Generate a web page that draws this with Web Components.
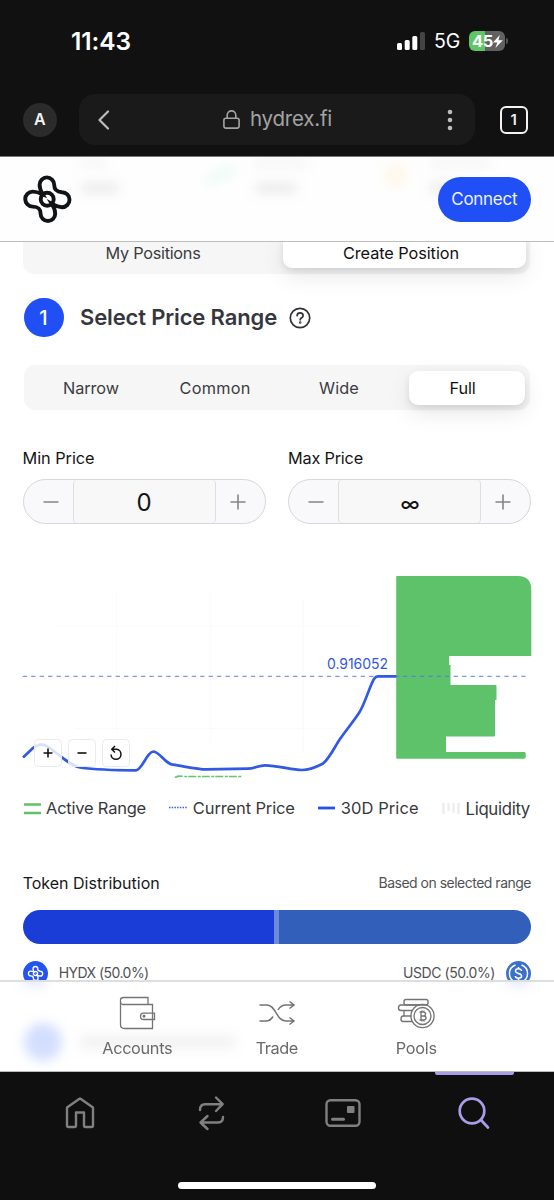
<!DOCTYPE html>
<html lang="en">
<head>
<meta charset="utf-8">
<title>Hydrex</title>
<style>
html,body{margin:0;padding:0;background:#fff}
body{width:554px;height:1200px;overflow:hidden;font-family:Inter,"Liberation Sans",sans-serif}
</style>
</head>
<body>
<phone-screen></phone-screen>
<script>
const mount = (el, html) => { el.attachShadow({mode:'open'}).innerHTML = html; };
const pen = document.createElement('canvas').getContext('2d');

/* Single-line text tracked to a given width. */
class FitText extends HTMLElement {
  connectedCallback() {
    if (this.shadowRoot) return;
    const size = this.getAttribute('size') || 17, weight = this.getAttribute('weight') || 400;
    const w = +this.getAttribute('w'), t = this.textContent;
    pen.font = `${weight} ${size}px Inter`;
    const ls = (w - pen.measureText(t).width) / Math.max(1, t.length);
    mount(this, `<style>:host{display:block;flex:none;width:${w}px;white-space:nowrap;font:${weight} ${size}px/1.2 Inter,"Liberation Sans",sans-serif;letter-spacing:${ls.toFixed(3)}px}</style><slot></slot>`);
  }
}

const LOGO = `<path d="M-4.6-5C-6.500-8.500-7.600-10.500-7.600-14.500A7.300 7.300 0 0 1 7-14.500C7-9.300 9.500-7.400 14.800-7A7.500 7.500 0 0 1 14.800 8C10.500 8 8 6.500 4.800 4.800C7 8.500 8 10.500 8 14.500A7.300 7.300 0 0 1-6.600 14.500C-6.600 9.300-9 7.600-14.500 7.400A7.500 7.500 0 0 1-14.500-7.600C-10.500-7.600-8-6.500-4.600-5Z"/><circle r="6.500"/>`;

class StatusBar extends HTMLElement {
  connectedCallback() {
    mount(this, `<style>
      :host{display:flex;height:83px;box-sizing:border-box;padding:0 46px 0 71px;align-items:center;justify-content:space-between;color:#fff}
      .r{display:flex;align-items:center;gap:9px} svg{display:block}
      .bat{display:flex;align-items:center;justify-content:flex-start;box-sizing:border-box;width:36px;height:20px;padding-left:3px;border-radius:6px;background:linear-gradient(90deg,#5fc665 45%,#616161 45%)}
      .nub{width:2px;height:6px;border-radius:0 2px 2px 0;background:#555;margin-left:-8px}
    </style>
    <fit-text w="60" size="24.5" weight="600">11:43</fit-text>
    <div class="r">
      <svg width="28" height="18" fill="#fff"><rect y="11" width="5" height="7" rx="1.5"/><rect x="7.7" y="8" width="5" height="10" rx="1.5"/><rect x="15.3" y="4" width="5" height="14" rx="1.5"/><rect x="23" width="5" height="18" rx="1.5" fill="#444"/></svg>
      <fit-text w="26" size="19.5">5G</fit-text>
      <div class="bat"><fit-text w="21" size="16.5" weight="700">45</fit-text><svg width="10" height="13" viewBox="0 0 10 13" fill="#fff"><path d="M6.8 0L0 7.4H4.3L2.4 13L9.8 5.3H5.4Z"/></svg></div>
      <span class="nub"></span>
    </div>`);
  }
}

class BrowserBar extends HTMLElement {
  connectedCallback() {
    mount(this, `<style>
      :host{display:flex;height:73px;box-sizing:border-box;padding:12px 26px 12px 22.5px;align-items:center;color:#eee}
      .a{display:flex;align-items:center;justify-content:center;width:34px;height:34px;border-radius:50%;background:#2b2b2b;color:#f4f4f4}
      .u{display:flex;align-items:center;box-sizing:border-box;margin:0 25px 0 22.5px;width:396px;height:51px;border-radius:16px;background:#1a1a1a;color:#a3a3a3;padding:0 22.5px 0 19px}
      .lock{margin-left:113px;margin-right:10px}.dots{margin-left:auto}
      .t{display:flex;align-items:center;justify-content:center;box-sizing:border-box;width:28px;height:28px;border:2.6px solid #f3f3f3;border-radius:6px}
      svg{display:block}
    </style>
    <div class="a"><fit-text w="11" size="16" weight="600">A</fit-text></div>
    <div class="u">
      <svg width="12" height="20" fill="none" stroke="#bbb" stroke-width="2.2" stroke-linecap="round" stroke-linejoin="round"><path d="M10 1.5L1.5 10L10 18.5"/></svg>
      <svg class="lock" width="17" height="19" fill="none" stroke="#a3a3a3" stroke-width="1.6"><rect x=".9" y="8.2" width="15.2" height="9.9" rx="2"/><path d="M4.2 8V5.2a4.3 4.3 0 0 1 8.6 0V8"/></svg>
      <fit-text w="82" size="20.5">hydrex.fi</fit-text>
      <svg class="dots" width="6" height="22" fill="#bbb"><circle cx="3" cy="3" r="2.3"/><circle cx="3" cy="11" r="2.3"/><circle cx="3" cy="19" r="2.3"/></svg>
    </div>
    <div class="t"><fit-text w="7" size="15" weight="600">1</fit-text></div>`);
  }
}

class AppHeader extends HTMLElement {
  connectedCallback() {
    mount(this, `<style>
      :host{position:relative;display:flex;flex:none;align-items:center;justify-content:space-between;box-sizing:border-box;height:86px;padding:0 23px;border-top:1px solid #777;border-bottom:1.5px solid #bdbdbd;background:#fefefe;overflow:hidden}
      .haze{position:absolute;inset:0;width:554px;height:86px}
      .logo{position:relative;display:block}
      .b{position:relative;display:flex;align-items:center;justify-content:center;width:93.5px;height:45px;border-radius:23px;background:#204ff5;color:#eef2ff}
    </style>
    <svg class="haze"><defs><filter id="f" x="-100%" y="-200%" width="300%" height="500%"><feGaussianBlur stdDeviation="6"/></filter></defs><g filter="url(#f)">
      <rect x="82" y="26" width="36" height="10" fill="#aaa" opacity=".25"/><rect x="256" y="26" width="40" height="10" fill="#aaa" opacity=".25"/><rect x="430" y="26" width="30" height="10" fill="#aaa" opacity=".25"/>
      <rect x="80" y="3" width="26" height="6" fill="#bbb" opacity=".2"/><rect x="254" y="3" width="54" height="6" fill="#bbb" opacity=".2"/><rect x="430" y="3" width="60" height="6" fill="#bbb" opacity=".2"/>
      <path d="M206 24L236 12" stroke="#8fe0c0" stroke-width="10" opacity=".15"/><circle cx="396" cy="18" r="12" fill="#ffdf9e" opacity=".2"/></g></svg>
    <svg class="logo" width="50" height="50" viewBox="-24.2 -25.2 50 50" fill="none" stroke="#111417" stroke-width="3.9">${LOGO}</svg>
    <div class="b"><fit-text w="66" size="17">Connect</fit-text></div>`);
  }
}

class SegItem extends HTMLElement {
  connectedCallback() {
    mount(this, `<style>
      :host{display:flex;align-items:center;justify-content:center;height:34px;color:#3b3c3f;box-sizing:border-box;padding-top:var(--drop,2px)}
      :host([active]){background:#fff;border-radius:9px;color:#111;box-shadow:0 8px 24px rgba(0,0,0,.09),0 3px 7px rgba(0,0,0,.09)}
    </style><slot></slot>`);
  }
}
class SegBar extends HTMLElement {
  connectedCallback() {
    mount(this, `<style>:host{display:grid;box-sizing:border-box;background:#f6f6f6;border-radius:11px;padding:5.5px 5px}</style><slot></slot>`);
  }
}

class StepTitle extends HTMLElement {
  connectedCallback() {
    mount(this, `<style>:host{display:flex;align-items:center;height:40px;margin:24px 0 0 24px;color:#35373c}
      .n{display:flex;align-items:center;justify-content:center;width:39.5px;height:39.5px;border-radius:50%;background:#204ff5;color:#fff;margin-right:16.5px}svg{display:block;margin-left:12px}</style>
    <div class="n"><fit-text w="9" size="20" weight="500">1</fit-text></div><slot></slot>
    <svg width="22" height="22" fill="none" stroke="#303236" stroke-width="1.7" stroke-linecap="round"><circle cx="11" cy="11" r="9.7"/><path d="M8.1 8.6C8.3 5 14.1 5 14.1 8.7C14.1 10.8 11.2 10.8 11.2 12.8"/><circle cx="11.2" cy="15.6" r=".4"/></svg>`);
  }
}

class PriceInput extends HTMLElement {
  connectedCallback() {
    mount(this, `<style>
      :host{display:block;color:#141414}
      .box{display:grid;grid-template-columns:49px 1fr 49px;box-sizing:border-box;height:45px;margin-top:10.5px;border:1.3px solid #d6d7db;border-radius:23px;background:#f9f9fb;overflow:hidden}
      .box>div{display:flex;align-items:center;justify-content:center}
      .m{padding-left:5px}.p{padding-right:5px}
      .v{border:solid #dddee2;border-width:0 1.2px;border-radius:4px;background:#f8f8f9;padding-top:4px}
      svg{display:block}
    </style><slot name="label"></slot>
    <div class="box"><div class="m"><svg width="16" height="16" stroke="#858585" stroke-width="1.6"><path d="M.5 8H15.5"/></svg></div>
    <div class="v"><slot></slot></div>
    <div class="p"><svg width="16" height="16" stroke="#858585" stroke-width="1.6"><path d="M.5 8H15.5M8 .5V15.5"/></svg></div></div>`);
  }
}

class PriceChart extends HTMLElement {
  connectedCallback() {
    mount(this, `<style>
      :host{position:relative;display:block;height:224px;margin-top:46px}
      svg{display:block}
      .tools{position:absolute;left:33.5px;top:168.5px;display:flex;gap:6px}
      .tools div{display:flex;align-items:center;justify-content:center;width:28px;height:28px;box-sizing:border-box;border:1.4px solid #e9e9f5;border-radius:4.5px;background:rgba(255,255,255,.82)}
    </style>
    <svg width="554" height="224" viewBox="0 570 554 224" fill="none">
      <path d="M116.5 592V740M210.500 592V745M303.500 600V752M55 626.500H360M75 728.500H350" stroke="#fafafb"/>
      <path d="M397 576H518Q531.300 576 531.300 590V656H449V665H450.500V685H495.500Q496.500 685 496.500 686V700H495V735.500Q495 736.600 494 736.600H446V752H524.500Q525.700 752 525.700 753.500V757Q525.700 758.800 524 758.800H397Q396.200 758.800 396.200 758V577Q396.200 576 397 576Z" fill="#5ec26a"/>
      <path d="M22.700 676.400H528" stroke="#5570f2" stroke-opacity=".75" stroke-width="1.2" stroke-dasharray="4.300 4.150"/>
      <path d="M23 757.500L33 748C38 743.500 44 743.500 50 748C61 757 72 766 80 767.500C98 770 110 770.300 136 770.300C142 770.300 147 751.500 153.500 751.500C160 752 165 764 173 764.700C185 766.500 198 769.300 206 769.400L248 768.700C254 768.500 259 765.300 265 765.300C278 765.500 292 770 302 770C311 770 318 766 323 763.500C329 759 334 748 340 739C347 729 353 722 359 713C365 704 370 685 374 679Q375.700 676.400 378 676.400H396.500" stroke="#3059e4" stroke-width="2.700"/>
      <path d="M175 777.500Q178 775.500 184 776.500H242" stroke="#62c56f" stroke-width="1.600" stroke-dasharray="8 1.500 3 1"/>
      <text x="327" y="669.300" textLength="61" fill="#3158e5" font-family="Inter" font-size="14">0.916052</text>
    </svg>
    <div class="tools">
      <div><svg width="10" height="10" stroke="#111" stroke-width="1.600"><path d="M.5 5H9.500M5 .5V9.500"/></svg></div>
      <div><svg width="10" height="10" stroke="#111" stroke-width="1.600"><path d="M.5 5H9.500"/></svg></div>
      <div><svg width="14" height="16" fill="none" stroke="#111" stroke-width="1.500"><path d="M3.500 4.300H7.500A5 5 0 1 1 2 9.500M6 1L2.800 4.300L6 7.500"/></svg></div>
    </div>`);
  }
}

class ChartLegend extends HTMLElement {
  connectedCallback() {
    mount(this, `<style>
      :host{display:flex;align-items:center;justify-content:space-between;height:30px;padding:0 24px 0 23.500px;color:#37393d}
      div{display:flex;align-items:center;gap:5.500px}svg{display:block}
    </style>
    <div><svg width="17" height="12" stroke="#5ec26a" stroke-width="2.600"><path d="M0 1.500H17M0 10H17"/></svg><fit-text w="100" size="16.500">Active Range</fit-text></div>
    <div><svg width="18" height="12" stroke="#3e60e6" stroke-width="1.500" stroke-dasharray="1.500 1.200"><path d="M0 4.500H18"/></svg><fit-text w="102" size="16.500">Current Price</fit-text></div>
    <div><svg width="17" height="12" stroke="#2354e8" stroke-width="2.800"><path d="M0 5H17"/></svg><fit-text w="78" size="16.500">30D Price</fit-text></div>
    <div><svg width="18" height="14" stroke="#ececec" stroke-width="2.200"><path d="M1.500 1V12M6.500 1V9M11.500 1V11M16.500 1V12"/></svg><fit-text w="64.500" size="16.800">Liquidity</fit-text></div>`);
  }
}

class TokenSplit extends HTMLElement {
  connectedCallback() {
    mount(this, `<style>
      :host{display:block;padding:0 23px 0 22.700px;margin-top:49px;color:#515255}
      .row{display:flex;align-items:center;justify-content:space-between;height:20px}
      .h{color:#17181a;margin-top:2px}
      .bar{display:grid;grid-template-columns:251.500px 5px 1fr;height:34px;margin:17px 0;border-radius:17px;overflow:hidden}
      .bar i:nth-child(1){background:#1a3dd7}.bar i:nth-child(2){background:#6d8bd9}.bar i:nth-child(3){background:#315fb9}
      .k{height:25px}.k div{display:flex;align-items:center;gap:11px}.k svg{display:block}
    </style>
    <div class="row"><fit-text class="h" w="137" size="16">Token Distribution</fit-text><fit-text w="152.500" size="14">Based on selected range</fit-text></div>
    <div class="bar"><i></i><i></i><i></i></div>
    <div class="row k"><div><svg width="25" height="25" viewBox="-12.500 -12.500 25 25"><circle r="12.500" fill="#2354ef"/><g transform="scale(.32)" fill="none" stroke="#fff" stroke-width="4.300">${LOGO}</g></svg><fit-text w="90" size="14">HYDX (50.0%)</fit-text></div>
    <div><fit-text w="92" size="14">USDC (50.0%)</fit-text><svg width="25" height="25" viewBox="-12.500 -12.500 25 25" fill="none" stroke="#fff" stroke-width="1.500"><circle r="12.500" fill="#3b71c9" stroke="none"/><path d="M-3-8.500A9 9 0 0 0-3 8.500M3-8.500A9 9 0 0 1 3 8.500M3-2.600C3-5.400-3-5.400-3-2.500C-3 .7 3.100-.8 3.100 2.500C3.100 5.400-3 5.400-3.200 2.500M0-6.600V-4.500M0 4.500V6.600"/></svg></div></div>`);
  }
}

class AppNav extends HTMLElement {
  connectedCallback() {
    mount(this, `<style>
      :host{position:relative;display:block;flex:none;height:92px;box-sizing:border-box;border-top:2px solid #dedede;border-bottom:1px solid #bbb;background:#fff;color:#69696b;overflow:hidden}
      .haze{position:absolute;left:0;top:0}
      .g{position:relative;display:grid;grid-template-columns:repeat(3,139.500px);padding-left:67.500px}
      .g div{display:flex;flex-direction:column;align-items:center;padding-top:11.500px;gap:7px}svg{display:block}
    </style>
    <svg class="haze" width="554" height="90"><defs><filter id="f" x="-100%" y="-200%" width="300%" height="500%"><feGaussianBlur stdDeviation="6"/></filter></defs><g filter="url(#f)"><circle cx="43" cy="60" r="19" fill="#9db5ff" opacity=".45"/><rect x="80" y="53" width="155" height="14" fill="#999" opacity=".13"/><ellipse cx="35" cy="-2" rx="12" ry="6" fill="#8eaaff" opacity=".3"/><ellipse cx="519" cy="-2" rx="12" ry="6" fill="#8eaaff" opacity=".3"/></g></svg>
    <div class="g">
      <div><svg width="38" height="38" fill="none" stroke="#747474" stroke-width="1.300"><path d="M2.500 6.500V30.500Q2.500 34.500 6.500 34.500H34.500V10.500H5Q2.500 10.500 2.500 7V6Q2.500 3.500 5.500 3.500H30V10.500M34.500 19.200H25.500Q22.500 19.200 22.500 22.200Q22.500 25.500 25.500 25.500H36.500V19.200H34.500"/><circle cx="26" cy="22.300" r=".8"/></svg><fit-text w="70" size="16.300">Accounts</fit-text></div>
      <div><svg width="38" height="38" fill="none" stroke="#747474" stroke-width="1.500"><path d="M1.500 11H9C18 11 18 27 28 27H36M1.500 27H8C12 27 13.500 25 15 22.500M20 16C22 12.500 24 11 28 11H36M31.500 7.500L36 11L31.500 14.500M31.500 23.500L36 27L31.500 30.500"/></svg><fit-text w="42" size="16.300">Trade</fit-text></div>
      <div><svg width="40" height="38" fill="none" stroke="#747474" stroke-width="1.350"><rect x="8" y="5.500" width="24" height="5.500" rx="2"/><path d="M24 11H5Q2.500 11 2.500 14Q2.500 16.500 5 16.500H17M8 16.500V22H15.500M15.500 22H7Q5 22 5 25Q5 27.500 7 27.500H16"/><circle cx="26.500" cy="22" r="11.600"/><circle cx="26.500" cy="22" r="8.500"/><path d="M23.500 18H27.500Q29.500 18 29.500 20Q29.500 22 27.500 22H25M27.500 22Q30 22 30 24Q30 26 27.500 26H23.500M25 18V26M26 16.500V18M28 16.700V18M26 26V27.500M28 26V27.500"/></svg><fit-text w="41" size="16.300">Pools</fit-text></div>
    </div>`);
  }
}

class BrowserDock extends HTMLElement {
  connectedCallback() {
    mount(this, `<style>
      :host{display:flex;flex-direction:column;align-items:center;height:128px;background:#0f0f0f}
      .g{display:grid;grid-template-columns:repeat(4,131.500px);width:526px;height:109.500px}
      .g div{display:flex;justify-content:center;padding-top:21px;box-sizing:border-box}
      .g .on{display:grid;justify-items:center;align-content:start;padding:0;gap:18px}
      .on i{width:79px;height:3px;border-radius:0 0 2px 2px;background:#ab9ce8}
      .home{width:198px;height:7.500px;border-radius:4px;background:#fff}svg{display:block}
    </style>
    <div class="g">
      <div><svg width="40" height="40" fill="none" stroke="#808080" stroke-width="2.400" stroke-linejoin="round"><path d="M8.500 34H14.500Q16 34 16 32.500V19.500H24V32.500Q24 34 25.500 34H31.500Q33 34 33 32.500V14.500L20.500 5.700Q20 5.300 19.500 5.700L7 14.500V32.500Q7 34 8.500 34Z"/></svg></div>
      <div><svg width="40" height="40" fill="none" stroke="#808080" stroke-width="2.400" stroke-linecap="round" stroke-linejoin="round"><path d="M9 17Q9 11.200 14 11.200H31.500M25 4.500L31.700 11.200L25 18M32 24Q32 29.500 27 29.500H10M16.500 23L9.500 29.500L16.500 36"/></svg></div>
      <div><svg width="40" height="40" fill="none" stroke="#808080" stroke-width="2.400"><rect x="3.500" y="7.300" width="33" height="25.500" rx="4"/><path d="M9.500 26.300H20.500" stroke-width="3" stroke-linecap="round"/><rect x="24" y="13" width="7.500" height="7" rx="1" fill="#808080" stroke="none"/></svg></div>
      <div class="on"><i></i><svg width="40" height="40" fill="none" stroke="#ab9ce8" stroke-width="2.700" stroke-linecap="round"><circle cx="18" cy="18" r="12.300"/><path d="M27 27L34 34.500"/></svg></div>
    </div><span class="home"></span>`);
  }
}

class PhoneScreen extends HTMLElement {
  connectedCallback() {
    mount(this, `<style>
      :host{display:flex;flex-direction:column;width:554px;height:1200px;background:#fff}
      .chrome{flex:none;height:156px;background:#111}
      main{flex:none;height:738px;overflow:hidden}
      .tabs{--drop:5px;grid-template-columns:260px 243px;margin:-13.500px 24px 0 23px;padding:5.500px 5px 5.500px 0}
      .tabs seg-item[active]{padding-right:7px}
      .range{grid-template-columns:124px 124px 124px 1fr;margin:27.500px 24px 0;height:45px}
      .range seg-item[active]{margin-left:8px;padding-right:9px}
      .prices{display:grid;grid-template-columns:243px 243px;gap:22.500px;margin:39px 0 0 22.500px}
    </style>
    <div class="chrome"><status-bar></status-bar><browser-bar></browser-bar></div>
    <app-header></app-header>
    <main>
      <seg-bar class="tabs"><seg-item><fit-text w="95" size="16.300">My Positions</fit-text></seg-item><seg-item active><fit-text w="116" size="16.300">Create Position</fit-text></seg-item></seg-bar>
      <step-title><fit-text w="197" size="22" weight="600">Select Price Range</fit-text></step-title>
      <seg-bar class="range"><seg-item><fit-text w="56" size="16.300">Narrow</fit-text></seg-item><seg-item><fit-text w="71" size="16.300">Common</fit-text></seg-item><seg-item><fit-text w="40" size="16.300">Wide</fit-text></seg-item><seg-item active><fit-text w="26" size="16.300">Full</fit-text></seg-item></seg-bar>
      <div class="prices">
        <price-input><fit-text slot="label" w="72" size="16.300">Min Price</fit-text><fit-text w="15" size="24">0</fit-text></price-input>
        <price-input><fit-text slot="label" w="75" size="16.300">Max Price</fit-text><fit-text w="18" size="20" weight="500">∞</fit-text></price-input>
      </div>
      <price-chart></price-chart>
      <chart-legend></chart-legend>
      <token-split></token-split>
    </main>
    <app-nav></app-nav>
    <browser-dock></browser-dock>`);
  }
}

customElements.define('fit-text', FitText);
customElements.define('status-bar', StatusBar);
customElements.define('browser-bar', BrowserBar);
customElements.define('app-header', AppHeader);
customElements.define('seg-item', SegItem);
customElements.define('seg-bar', SegBar);
customElements.define('step-title', StepTitle);
customElements.define('price-input', PriceInput);
customElements.define('price-chart', PriceChart);
customElements.define('chart-legend', ChartLegend);
customElements.define('token-split', TokenSplit);
customElements.define('app-nav', AppNav);
customElements.define('browser-dock', BrowserDock);
customElements.define('phone-screen', PhoneScreen);
</script>
</body>
</html>
